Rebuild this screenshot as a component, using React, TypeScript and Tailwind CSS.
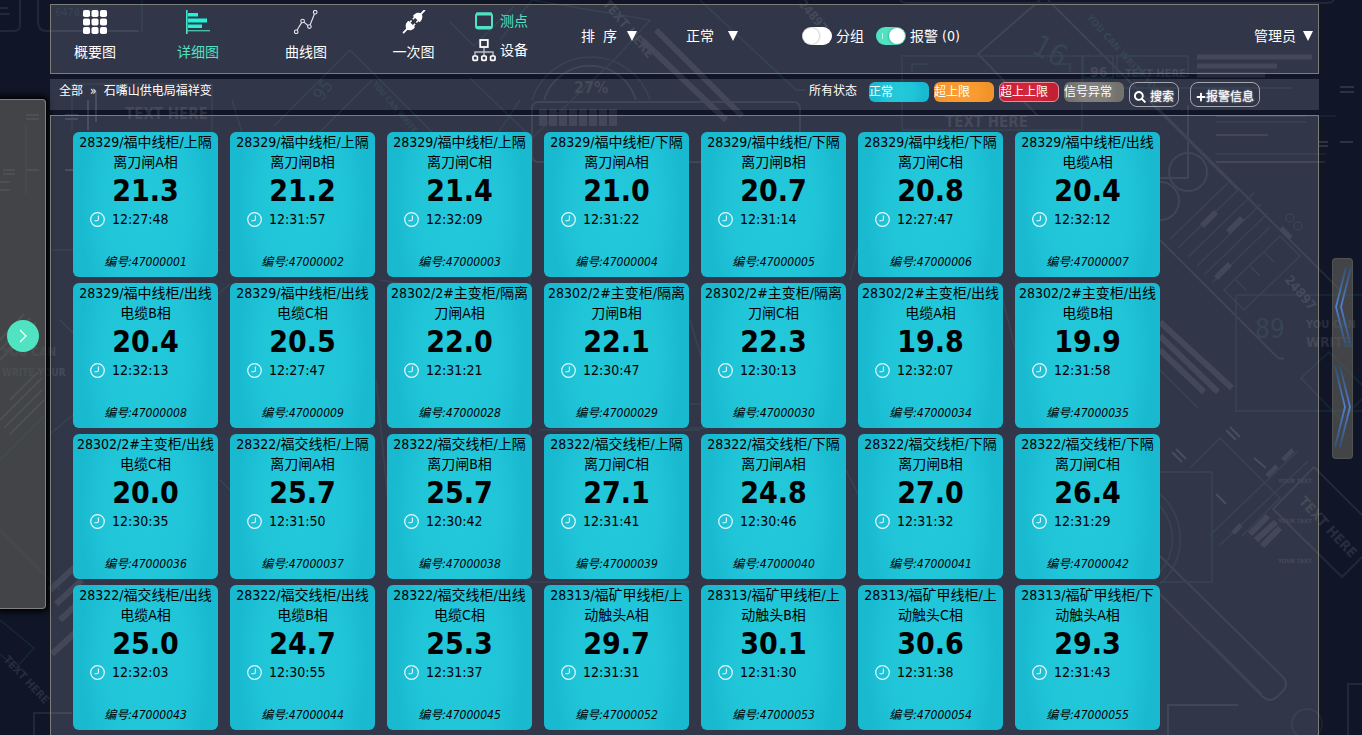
import { FaPlus, FaSearch } from 'react-icons/fa';
import type { ReactNode } from 'react';

type Point = {
  id: string;
  name: string;
  value: string;
  time: string;
};

const points: Point[] = [
  { id: '47000001', name: '28329/福中线柜/上隔离刀闸A相', value: '21.3', time: '12:27:48' },
  { id: '47000002', name: '28329/福中线柜/上隔离刀闸B相', value: '21.2', time: '12:31:57' },
  { id: '47000003', name: '28329/福中线柜/上隔离刀闸C相', value: '21.4', time: '12:32:09' },
  { id: '47000004', name: '28329/福中线柜/下隔离刀闸A相', value: '21.0', time: '12:31:22' },
  { id: '47000005', name: '28329/福中线柜/下隔离刀闸B相', value: '20.7', time: '12:31:14' },
  { id: '47000006', name: '28329/福中线柜/下隔离刀闸C相', value: '20.8', time: '12:27:47' },
  { id: '47000007', name: '28329/福中线柜/出线电缆A相', value: '20.4', time: '12:32:12' },
  { id: '47000008', name: '28329/福中线柜/出线电缆B相', value: '20.4', time: '12:32:13' },
  { id: '47000009', name: '28329/福中线柜/出线电缆C相', value: '20.5', time: '12:27:47' },
  { id: '47000028', name: '28302/2#主变柜/隔离刀闸A相', value: '22.0', time: '12:31:21' },
  { id: '47000029', name: '28302/2#主变柜/隔离刀闸B相', value: '22.1', time: '12:30:47' },
  { id: '47000030', name: '28302/2#主变柜/隔离刀闸C相', value: '22.3', time: '12:30:13' },
  { id: '47000034', name: '28302/2#主变柜/出线电缆A相', value: '19.8', time: '12:32:07' },
  { id: '47000035', name: '28302/2#主变柜/出线电缆B相', value: '19.9', time: '12:31:58' },
  { id: '47000036', name: '28302/2#主变柜/出线电缆C相', value: '20.0', time: '12:30:35' },
  { id: '47000037', name: '28322/福交线柜/上隔离刀闸A相', value: '25.7', time: '12:31:50' },
  { id: '47000038', name: '28322/福交线柜/上隔离刀闸B相', value: '25.7', time: '12:30:42' },
  { id: '47000039', name: '28322/福交线柜/上隔离刀闸C相', value: '27.1', time: '12:31:41' },
  { id: '47000040', name: '28322/福交线柜/下隔离刀闸A相', value: '24.8', time: '12:30:46' },
  { id: '47000041', name: '28322/福交线柜/下隔离刀闸B相', value: '27.0', time: '12:31:32' },
  { id: '47000042', name: '28322/福交线柜/下隔离刀闸C相', value: '26.4', time: '12:31:29' },
  { id: '47000043', name: '28322/福交线柜/出线电缆A相', value: '25.0', time: '12:32:03' },
  { id: '47000044', name: '28322/福交线柜/出线电缆B相', value: '24.7', time: '12:30:55' },
  { id: '47000045', name: '28322/福交线柜/出线电缆C相', value: '25.3', time: '12:31:37' },
  { id: '47000052', name: '28313/福矿甲线柜/上动触头A相', value: '29.7', time: '12:31:31' },
  { id: '47000053', name: '28313/福矿甲线柜/上动触头B相', value: '30.1', time: '12:31:30' },
  { id: '47000054', name: '28313/福矿甲线柜/上动触头C相', value: '30.6', time: '12:31:38' },
  { id: '47000055', name: '28313/福矿甲线柜/下动触头A相', value: '29.3', time: '12:31:43' },
];

const states = [
  {
    label: '正常',
    className: 'bg-[radial-gradient(ellipse_45%_110%_at_50%_50%,#23c8db_0%,#21c5d8_55%,#19bad0_90%)]',
  },
  {
    label: '超上限',
    className: 'bg-[radial-gradient(ellipse_45%_110%_at_50%_50%,#fb9d35_0%,#f99a30_55%,#f0942a_90%)]',
  },
  {
    label: '超上上限',
    className:
      'border border-[#e58c98] bg-[radial-gradient(ellipse_45%_110%_at_50%_50%,#d3263c_0%,#cf2439_55%,#c41f33_90%)]',
  },
  {
    label: '信号异常',
    className: 'bg-[radial-gradient(ellipse_45%_110%_at_50%_50%,#868480_0%,#807e7b_55%,#73726f_90%)]',
  },
];

function GridIcon() {
  return (
    <svg width="24" height="24" viewBox="0 0 24 24" fill="#fff">
      {[0, 8.5, 17].map((y) =>
        [0, 8.5, 17].map((x) => (
          <rect key={`${x}-${y}`} x={x} y={y} width="7" height="7" rx="1.8" />
        )),
      )}
    </svg>
  );
}

function BarsIcon() {
  return (
    <svg width="24" height="24" viewBox="0 0 24 24" fill="#20f3da">
      <path d="M0 0h1.6v24H0z" fill="#50e3c2" />
      <path d="M2 3h10v3.5H2zM2 8.5h19v4H2zM2 14.5h14V18H2z" />
      <path d="M0 20.2h24v1.1H0z" fill="#50e3c2" />
    </svg>
  );
}

function CurveIcon() {
  return (
    <svg width="24" height="24" viewBox="0 0 24 24" fill="none" stroke="#e6e8ee" strokeWidth="1.1">
      <path d="M3 20.2 7.6 12.6M10 12.2l4 3.4M16.2 14.8 20.4 4" />
      <circle cx="2.2" cy="21.8" r="1.8" />
      <circle cx="8.6" cy="11" r="1.8" />
      <circle cx="15.4" cy="16.6" r="1.8" />
      <circle cx="21.2" cy="2.2" r="1.8" />
    </svg>
  );
}

function PlugIcon() {
  return (
    <svg width="24" height="24" viewBox="0 0 24 24">
      <g transform="translate(12 11.5) rotate(43)" stroke="#fff" fill="#fff">
        <path d="M0-16v7M0 9v7" strokeWidth="1.8" />
        <path d="M-4.6-3.4v-1.4C-4.6-8-2.6-10.2 0-10.8 2.6-10.2 4.6-8 4.6-4.8v1.4z" stroke="none" />
        <path d="M-4.6 3.4v1.4C-4.6 8-2.6 10.2 0 10.8 2.6 10.2 4.6 8 4.6 4.8V3.4z" stroke="none" />
        <path d="M-2.4-4v3.2M2.4-4v3.2M-2.4 4V1M2.4 4V1" strokeWidth="1.5" />
      </g>
    </svg>
  );
}

function PointIcon() {
  return (
    <svg width="24" height="24" viewBox="0 0 24 24" fill="none">
      <rect x="4" y="4.5" width="16" height="15" rx="2.5" stroke="#50e3c2" strokeWidth="2" />
      <path d="M4 5h16M4 18.6h16" stroke="#50e3c2" strokeWidth="3" />
    </svg>
  );
}

function DeviceIcon() {
  return (
    <svg width="24" height="24" viewBox="0 0 24 24" fill="none" stroke="#fff">
      <rect x="8.2" y="2" width="7.6" height="7" strokeWidth="1.8" />
      <path d="M12 10v8M3 18v-4h18v4" stroke="#b9bcc6" strokeWidth="1.4" />
      <rect x="1" y="18" width="4.4" height="4.4" rx="0.8" strokeWidth="1.7" />
      <rect x="9.8" y="18" width="4.4" height="4.4" rx="0.8" strokeWidth="1.7" />
      <rect x="18.6" y="18" width="4.4" height="4.4" rx="0.8" strokeWidth="1.7" />
    </svg>
  );
}

function ClockIcon() {
  return (
    <svg width="15" height="15" viewBox="0 0 15 15" fill="none" stroke="#e8fbfd">
      <circle cx="7.5" cy="7.5" r="6.8" strokeWidth="1.2" />
      <path d="M8.4 3.6v3.6q0 1.6-1.6 1.6H4.4" strokeWidth="1.1" />
    </svg>
  );
}

function Caret() {
  return (
    <svg width="10" height="10" viewBox="0 0 10 10" fill="#fff" className="pointer-events-none shrink-0">
      <path d="M0 0h10L5 10z" />
    </svg>
  );
}

function Dropdown({ label, text, className }: { label: string; text: string; className: string }) {
  return (
    <label className="flex items-center">
      <select
        aria-label={label}
        className={`appearance-none bg-transparent text-sm leading-5 text-white outline-none ${className}`}
      >
        <option className="text-black">{text}</option>
      </select>
      <Caret />
    </label>
  );
}

function Toggle({ label, checked }: { label: string; checked?: boolean }) {
  return (
    <label className="flex items-center gap-1">
      <input
        type="checkbox"
        defaultChecked={checked}
        className="relative h-[18px] w-[30px] appearance-none rounded-full bg-white before:absolute before:top-px before:left-px before:size-4 before:rounded-full before:bg-white before:shadow-[0_0_2px_1px_rgba(0,0,0,0.2)] checked:bg-[#50e3c2] checked:before:left-[13px] after:absolute after:top-[6px] after:left-[6px] after:h-[6px] after:w-px after:bg-white/60"
      />
      <span>{label}</span>
    </label>
  );
}

function NavItem({ icon, label, active }: { icon: ReactNode; label: string; active?: boolean }) {
  return (
    <button className={`flex flex-col items-center gap-2 ${active ? 'text-[#50e3c2]' : 'text-white'}`}>
      {icon}
      <span>{label}</span>
    </button>
  );
}

function PointCard({ point }: { point: Point }) {
  return (
    <article className="h-[145px] w-[145px] rounded-md bg-[radial-gradient(ellipse_50%_110%_at_50%_50%,#23c8db_0%,#21c5d8_55%,#19bad0_90%)] text-center text-black">
      <h3 className="h-10 text-sm leading-5 break-all">{point.name}</h3>
      <p className="text-3xl leading-[38px] font-bold">{point.value}</p>
      <p className="flex h-[18px] items-center gap-[7px] pl-[17px] text-sm">
        <ClockIcon />
        {point.time}
      </p>
      <p className="mt-6 text-xs leading-5 italic">编号:{point.id}</p>
    </article>
  );
}

function Backdrop() {
  return (
    <svg
      aria-hidden="true"
      className="pointer-events-none absolute inset-0 h-full w-full"
      viewBox="0 0 1362 735"
      preserveAspectRatio="xMidYMid slice"
      fill="none"
      stroke="#172736"
      strokeWidth="1.5"
    >
      <g stroke="#202839" strokeWidth="2">
        <path d="M0 8h8M0 14h10M0 31h14q6 0 6-6V0M38 0v22q0 9 9 9h92M900 0q2 3 8 3h418q6 0 8-3" />
        <path d="M1155 105l190 190M1160 240l116 116q3 4 8 2" />
        <circle cx="1188" cy="172" r="19" />
        <circle cx="1160" cy="201" r="19" />
        <path d="M1188 178V105M1188 178h-28" />
        <path d="M1160 556l122 120q8 8 0 16l-4 4q-8 8-16 0l-102-102" />
        <path d="M544 100a48 48 0 0 1 92 0" />
        <rect x="532" y="102" width="268" height="60" rx="6" />
        <path d="M1040 0l-62 54 60 62M1048 0l190 190" />
        <path d="M1314 467l-41 42 69 68 20-20M1314 467l48 48" />
        <path d="M1348 735v-51h14M34 735v-22h38M1168 735v-30h70" />
      </g>
      <g>
        <path d="M450 22l24 24 40-40M500 40l32-40 118 20-34 38-84 80-62-60M700 0l96 90h10" />
        <path d="M350 50l-76 76M350 50l130 130M372 80l-120 120M902 56h180v74H902zM912 72v-8h16M1070 72v-8h-16" />
        <path d="M1083 56h30v22h-30zM1117 56h71v20h-71zM1083 88h210" />
        <path d="M532 100a62 62 0 0 1 118 0M72 130V84h140v60M26 124v70M142 0v32" />
        <path d="M1170 239l58-56M1178 248l60-58M1188 257l66-64M1197 266l64-62M1204 275l64-62M1212 283l58-56" />
        <path d="M1224 290l56-54 20 20-56 54zM1236 280l10 10M1250 266l10 10M1264 252l10 10" />
        <path d="M1160 350l44 44M1160 370l38 38M1236 295h126M1236 295v116h126M1301 378l28-26 40 40-28 28z" />
        <path d="M1190 468l30-30 60 60-38 38M1210 535l88-84M1220 545l88-84M1160 472h52v110h-52" />
        <path d="M1160 494a60 60 0 0 1 0 90M1160 506a50 50 0 0 1 0 66" />
        <path d="M1208 640l54 54M1216 116h120M1216 122h90M1216 154h110M1216 162h110" />
        <path d="M0 460l5-5 40-40M50 434l180-150M0 530l60 60M0 620l34 28-18 20-16-14M50 250h170M60 320l100 100" />
        <path d="M232 100l28 90M380 280l60 10M530 180v400M540 430h160M690 404h16v24h-16M480 160l40-60M850 280l20-80" />
        <path d="M220 480l30 30M376 380l20 200M530 582h160M690 320l30 100M846 470l30 60M1003 300l20 80" />
        <circle cx="1290" cy="218" r="4" />
        <circle cx="1298" cy="226" r="4" />
        <circle cx="1307" cy="724" r="15" />
      </g>
      <g stroke="#252a3b" strokeWidth="6">
        <path d="M642 40l84 80M656 30l86 86M1160 322l72 66M1160 336l58 56M1160 350l44 42" />
        <path d="M1202 226l14-14M1228 232l14-14M1216 278l14-14M1250 534l18-18M1256 540l20-18M1262 546l18-18" />
        <path d="M1283 460l10-10M1267 476l10-10M1233 533l8-8M1281 228l10 10M1197 57h115M1197 66h80M1197 75h68" strokeWidth="5" />
        <path d="M50 590l26-24M56 604l26-24M60 620l26-24M52 654l26-24" />
        <path d="M543 109v17M553 109v17M563 109v17M573 109v17M583 109v17M593 109v17M603 109v17M613 109v17" strokeWidth="8" />
      </g>
      <g stroke="#2c3240" strokeWidth="2">
        <path d="M26 115h13M26 119h13M65 115h13M65 119h13M3 170h12M3 174h12M0 182h10M0 190h10M26 170h13M65 170h12" />
        <path d="M1340 87h14M1340 92h14M1318 142h10M1318 146h10M1340 142h13" />
        <path d="M1216 135h52M1216 116h90M1216 162h108" stroke="#252a3b" />
        <path d="M0 340l24-26M0 350l30-32M0 360l36-38M10 400l28-28M0 420l42-42M4 428l38-38M10 434l34-34" />
        <path d="M1226 430l10 10M1230 427l10 10M1172 452l10 10M1176 449l10 10M1254 458l12 10M1216 494l10 10M88 100v30M96 92v30" />
      </g>
      <g
        stroke="none"
        fill="#272d3d"
        fontFamily="'DejaVu Sans Condensed','Liberation Sans',sans-serif"
        fontWeight="bold"
        fontSize="15"
      >
        <text x="125" y="119">TEXT HERE</text>
        <text x="945" y="127">TEXT HERE</text>
        <text x="1125" y="77" fontSize="11">TEXT HERE</text>
        <text x="1090" y="77" fontSize="14">96</text>
        <text x="574" y="93" fontSize="16">27%</text>
        <text x="2" y="356" fontSize="12">YOU CAN</text>
        <text x="2" y="376" fontSize="10">WRITE YOUR</text>
        <text x="1306" y="328" fontSize="11">YOU CAN</text>
        <text x="1306" y="347" fontSize="14">WRITE</text>
        <text x="1255" y="338" fontSize="26" fontWeight="normal" fill="#172736">89</text>
        <text x="55" y="16" fontSize="11" fontWeight="normal" fill="#172736">6478220</text>
        <text transform="translate(1298 502) rotate(47)" fontSize="14">TEXT HERE</text>
        <text transform="translate(3 660) rotate(47)" fontSize="11">TEXT HERE</text>
        <text transform="translate(602 4) rotate(50)" fontSize="13">TEXT HERE</text>
        <text transform="translate(798 4) rotate(50)" fontSize="12">24897</text>
        <text transform="translate(1284 280) rotate(50)" fontSize="13">24897</text>
        <text transform="translate(1030 52) rotate(28)" fontSize="30" fontWeight="normal" fill="#172736">16</text>
        <text transform="translate(322 102) rotate(-55)" fontSize="18" fontWeight="normal" fill="#172736">95</text>
        <text transform="translate(1086 18) rotate(48)" fontSize="10" fill="#172736">YOU CAN WRITE YOUR</text>
        <text transform="translate(372 84) rotate(50)" fontSize="8" fill="#172736">YOU CAN WRITE YOUR</text>
        <text x="1278" y="483" fontSize="6">YOUR TEXT</text>
        <text x="1278" y="523" fontSize="6">YOUR TEXT</text>
        <text x="1278" y="563" fontSize="6">YOUR TEXT</text>
      </g>
    </svg>
  );
}

export default function App() {
  return (
    <div className="relative flex min-h-screen overflow-hidden bg-[#101628] font-['DejaVu_Sans_Condensed','Noto_Sans_CJK_SC',sans-serif] text-sm leading-5 text-white">
      <Backdrop />

      <aside className="relative mt-[99px] mr-1 h-[510px] w-[46px] shrink-0 rounded-r border border-l-0 border-[#808080] bg-[#64645c]/60 pt-[220px] pl-[7px] shadow-[0_0_6px_3px_#000]">
        <button
          aria-label="展开"
          className="flex size-8 items-center justify-center rounded-full bg-[#50e3c2]"
        >
          <svg width="8" height="14" viewBox="0 0 8 14" fill="none" stroke="#fff" strokeWidth="1.2">
            <path d="M1 1l6 6-6 6" />
          </svg>
        </button>
      </aside>

      <main className="relative flex min-w-0 flex-1 flex-col">
        <header className="mt-1 flex h-[70px] items-center justify-between border border-[#7d7d78] bg-[#f0f2ff]/15 pr-[5px] pb-[7px]">
          <div className="flex items-center">
            <nav className="grid grid-cols-[88px_118px_98px_117px]">
              <NavItem icon={<GridIcon />} label="概要图" />
              <NavItem icon={<BarsIcon />} label="详细图" active />
              <NavItem icon={<CurveIcon />} label="曲线图" />
              <NavItem icon={<PlugIcon />} label="一次图" />
            </nav>
            <div className="flex w-[109px] flex-col gap-[5px]">
              <button className="flex items-center gap-1 text-[#50e3c2]">
                <PointIcon />
                测点
              </button>
              <button className="flex items-center gap-1">
                <DeviceIcon />
                设备
              </button>
            </div>
            <div className="flex w-[105px]">
              <Dropdown label="排序" text={'排\u00a0\u00a0序'} className="w-[46px]" />
            </div>
            <div className="flex w-[116px]">
              <Dropdown label="状态" text="正常" className="w-[42px]" />
            </div>
            <div className="flex gap-3">
              <Toggle label="分组" />
              <Toggle label="报警 (0)" checked />
            </div>
          </div>
          <Dropdown label="用户" text="管理员" className="w-[49px]" />
        </header>

        <div className="mt-[5px] flex h-[31px] items-start justify-between bg-[#f0f2ff]/15 pt-[3px] pr-[59px] pl-[9px] text-xs">
          <nav className="flex gap-[7px] leading-[18px]">
            <a href="#all">全部</a>
            <span>»</span>
            <a href="#station">石嘴山供电局福祥变</a>
          </nav>
          <div className="flex items-start gap-[5px]">
            <span className="mr-[7px] leading-[18px]">所有状态</span>
            {states.map((state) => (
              <button
                key={state.label}
                className={`flex h-5 w-[60px] items-center rounded-md leading-[18px] ${state.className}`}
              >
                {state.label}
              </button>
            ))}
            <button className="flex h-[25px] w-[50px] items-center justify-center gap-1 rounded-lg border border-[#a4a7b0] pt-1 leading-5 [text-shadow:0_0_2px_#fff]">
              <FaSearch size={12} />
              搜索
            </button>
            <button className="ml-[6px] flex h-[25px] w-[70px] items-center justify-center rounded-lg border border-[#a4a7b0] pt-1 leading-5 [text-shadow:0_0_2px_#fff]">
              <FaPlus size={10} />
              报警信息
            </button>
          </div>
        </div>

        <section className="mt-[5px] flex flex-1 flex-wrap content-start gap-x-3 gap-y-[6px] border border-b-0 border-[#7d7d78] bg-[#f0f2ff]/15 pt-4 pr-4 pb-[5px] pl-[22px]">
          {points.map((point) => (
            <PointCard key={point.id} point={point} />
          ))}
        </section>
      </main>

      <aside className="relative w-[43px] shrink-0 pt-[258px] pl-[13px]">
        <button
          aria-label="侧栏"
          className="flex h-[201px] w-[21px] items-center justify-center rounded border border-[#6a6a66]/40 bg-[#64645c]/60"
        >
          <svg width="19" height="187" viewBox="0 0 19 187" fill="none" stroke="url(#chevron)" strokeWidth="1.8">
            <defs>
              <linearGradient id="chevron" gradientUnits="userSpaceOnUse" x1="0" y1="0" x2="0" y2="187">
                <stop offset="0" stopColor="#30506f" />
                <stop offset="0.22" stopColor="#4f7fd6" />
                <stop offset="0.44" stopColor="#30506f" />
                <stop offset="0.54" stopColor="#30506f" />
                <stop offset="0.76" stopColor="#4f7fd6" />
                <stop offset="1" stopColor="#30506f" />
              </linearGradient>
            </defs>
            <path d="M13 2L3 42l10 40M18 2L8 42l10 40" />
            <path d="M2 101l10 41-10 40M7 101l10 41-10 40" />
          </svg>
        </button>
      </aside>
    </div>
  );
}
